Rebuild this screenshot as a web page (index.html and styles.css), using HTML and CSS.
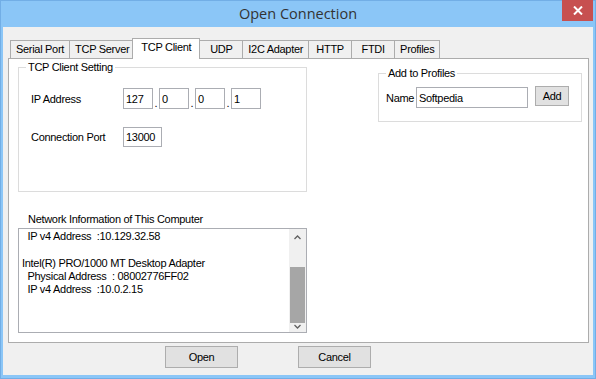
FILE: index.html
```html
<!DOCTYPE html>
<html lang="en">
<head>
    <meta charset="UTF-8">
    <title>Open Connection</title>
    <link rel="stylesheet" href="styles.css">
</head>
<body>
    <div class="window">
        <div class="titlebar">
            <span class="title">Open Connection</span>
            <div class="close-btn">
                <svg width="10" height="9" viewBox="0 0 10 9">
                    <path d="M1 0.5 L9 8.5 M9 0.5 L1 8.5" stroke="#fff" stroke-width="2" fill="none"/>
                </svg>
            </div>
        </div>

        <div class="client">
            <div class="tabs">
                <div class="tab">Serial Port</div>
                <div class="tab">TCP Server</div>
                <div class="tab active">TCP Client</div>
                <div class="tab">UDP</div>
                <div class="tab">I2C Adapter</div>
                <div class="tab">HTTP</div>
                <div class="tab">FTDI</div>
                <div class="tab">Profiles</div>
            </div>

            <div class="page">
                <div class="top-row">
                    <fieldset class="group group-tcp">
                        <legend>TCP Client Setting</legend>
                        <div class="row row-ip">
                            <span class="label">IP Address</span>
                            <input class="box ip-box" value="127">
                            <span class="dot">.</span>
                            <input class="box ip-box" value="0">
                            <span class="dot">.</span>
                            <input class="box ip-box" value="0">
                            <span class="dot">.</span>
                            <input class="box ip-box" value="1">
                        </div>
                        <div class="row row-port">
                            <span class="label">Connection Port</span>
                            <input class="box port-box" value="13000">
                        </div>
                    </fieldset>

                    <fieldset class="group group-profiles">
                        <legend>Add to Profiles</legend>
                        <div class="row">
                            <span class="name-label">Name</span>
                            <input class="box name-box" value="Softpedia">
                            <button class="btn add-btn">Add</button>
                        </div>
                    </fieldset>
                </div>

                <div class="net-label">Network Information of This Computer</div>
                <div class="netbox">
                    <div class="net-text">  IP v4 Address  :10.129.32.58

Intel(R) PRO/1000 MT Desktop Adapter
  Physical Address  : 08002776FF02
  IP v4 Address  :10.0.2.15</div>
                    <div class="scrollbar">
                        <div class="arrow arrow-up">
                            <svg width="7" height="5" viewBox="0 0 7 5">
                                <path d="M0.5 4 L3.5 1 L6.5 4" stroke="#606060" stroke-width="1.3" fill="none"/>
                            </svg>
                        </div>
                        <div class="track"><div class="thumb"></div></div>
                        <div class="arrow arrow-down">
                            <svg width="7" height="5" viewBox="0 0 7 5">
                                <path d="M0.5 1 L3.5 4 L6.5 1" stroke="#606060" stroke-width="1.3" fill="none"/>
                            </svg>
                        </div>
                    </div>
                </div>
            </div>

            <div class="buttons">
                <button class="btn dlg-btn">Open</button>
                <button class="btn dlg-btn">Cancel</button>
            </div>
        </div>
    </div>
</body>
</html>
```

FILE: styles.css
```css
body {
    margin: 0;
    font-family: "Liberation Sans", Arial, sans-serif;
    font-size: 11px;
    letter-spacing: -0.3px;
    color: #000;
}

.window {
    width: 596px;
    height: 379px;
    box-sizing: border-box;
    background-color: #8bc6f7;
    border: 1px solid #72aee6;
    padding: 0 2px 3px 2px;
    display: flex;
    flex-direction: column;
}

.titlebar {
    position: relative;
    height: 26px;
    line-height: 26px;
    text-align: center;
}

.title {
    font-family: "Open Sans", "Noto Sans", sans-serif;
    font-size: 14.5px;
    letter-spacing: 0;
    color: #333;
}

.close-btn {
    position: absolute;
    top: -1px;
    right: 0;
    width: 31px;
    height: 21px;
    background-color: #c75050;
    display: flex;
    justify-content: center;
    align-items: center;
}

.client {
    height: 348px;
    box-sizing: border-box;
    background-color: #f0f0f0;
    padding-top: 11px;
    display: flex;
    flex-direction: column;
}

/* tab strip */
.tabs {
    display: flex;
    align-items: flex-end;
    height: 20px;
    padding-left: 7px;
}

.tab {
    height: 17px;
    line-height: 17px;
    min-width: 32px;
    padding: 0 5px;
    text-align: center;
    border: 1px solid #acacac;
    border-bottom: none;
    background-color: #f0f0f0;
    margin-right: -1px;
    white-space: nowrap;
}

.tab.active {
    position: relative;
    z-index: 1;
    height: 17px;
    padding: 0 8px 3px 8px;
    margin: 0 -1px -1px -2px;
    background-color: #fff;
}

.page {
    height: 285px;
    box-sizing: border-box;
    margin-left: 5px;
    width: 581px;
    border: 1px solid #acacac;
    background-color: #fff;
}

.top-row {
    display: flex;
    align-items: flex-start;
}

.group {
    margin: 0;
    padding: 0;
    border: 1px solid #dcdcdc;
    box-sizing: border-box;
}

.group legend {
    margin-left: 7px;
    padding: 0 2px;
    line-height: 13px;
}

.group-tcp {
    margin: 2px 0 0 9px;
    width: 289px;
    height: 131px;
}

.group-profiles {
    margin: 8px 0 0 71px;
    width: 204px;
    height: 55px;
}

.row {
    display: flex;
    align-items: center;
}

.row-ip {
    margin-top: 14px;
    padding-left: 12px;
}

.row-port {
    margin-top: 18px;
    padding-left: 12px;
}

.label {
    width: 92px;
}

.box {
    box-sizing: border-box;
    height: 21px;
    border: 1px solid #abadb3;
    padding: 0 2px;
    font-family: inherit;
    font-size: 11px;
    letter-spacing: -0.3px;
    color: #000;
    background-color: #fff;
    outline: none;
}

.ip-box {
    width: 30px;
}

.dot {
    width: 6px;
    text-align: center;
    align-self: flex-end;
    line-height: 11px;
}

.port-box {
    width: 39px;
    height: 20px;
}

.group-profiles .row {
    margin-top: 7px;
    padding-left: 7px;
}

.name-label {
    width: 30px;
}

.name-box {
    width: 112px;
}

.btn {
    box-sizing: border-box;
    border: 1px solid #adadad;
    background-color: #e1e1e1;
    font-family: inherit;
    font-size: 11px;
    letter-spacing: -0.3px;
    color: #000;
    padding: 0;
}

.add-btn {
    width: 34px;
    height: 20px;
    margin-left: 7px;
    align-self: flex-start;
    margin-top: -1px;
}

.net-label {
    margin-top: 21px;
    padding-left: 19px;
    line-height: 13px;
}

.netbox {
    margin: 2px 0 0 9px;
    width: 289px;
    height: 105px;
    box-sizing: border-box;
    border: 1px solid #abadb3;
    display: flex;
}

.net-text {
    flex: 1;
    white-space: pre;
    line-height: 13.3px;
    padding: 1px 0 0 3px;
    overflow: hidden;
}

.scrollbar {
    width: 17px;
    background-color: #f0f0f0;
    display: flex;
    flex-direction: column;
}

.arrow {
    display: flex;
    justify-content: center;
}

.arrow-up {
    height: 17px;
    align-items: center;
}

.track {
    flex: 1;
    padding-top: 21px;
}

.thumb {
    height: 56px;
    margin: 0 1px 0 1px;
    background-color: #a6a6a6;
}

.arrow-down {
    height: 8px;
    padding-top: 1px;
    align-items: flex-start;
}

.buttons {
    display: flex;
    margin-top: 3px;
    padding-left: 162px;
    gap: 60px;
}

.dlg-btn {
    width: 73px;
    height: 22px;
}
```
